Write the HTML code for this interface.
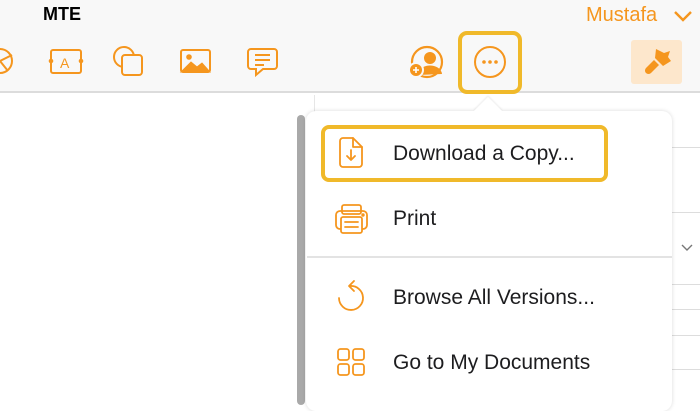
<!DOCTYPE html>
<html><head><style>
*{margin:0;padding:0;box-sizing:border-box}
body{width:700px;height:401px;overflow:hidden;background:#fff;font-family:"Liberation Sans",sans-serif;position:relative}
.tb{position:absolute;left:0;top:0;width:700px;height:93px;background:#f8f8f8;border-bottom:2px solid #dcdcdc}
.abs{position:absolute}
.line{position:absolute;left:672px;width:28px;height:1px;background:#ddd}
.t{position:absolute;left:393px;font-size:21px;color:#1d1d1f}
</style></head><body>
<div class="tb"></div>
<div class="abs" style="left:43px;top:4px;font-size:18px;font-weight:bold;color:#000">MTE</div>
<div class="abs" style="left:586px;top:4px;font-size:20px;color:#f5961e">Mustafa</div>
<svg class="abs" style="left:672px;top:6px" width="22" height="20"><path d="M3 6l8 8 8-8" fill="none" stroke="#f5961e" stroke-width="2.4"/></svg>
<svg class="abs" style="left:0;top:40px" width="300" height="40" stroke="#f5961e" fill="none" stroke-width="2">
<path d="M0 9a12 12 0 1 1 0 24"/><path d="M0 21l12-6M0 21l8 10"/>
<rect x="51" y="10" width="30" height="23" rx="2"/><circle cx="51" cy="21" r="1.3" fill="#f5961e"/><circle cx="81" cy="21" r="1.3" fill="#f5961e"/><text x="60" y="28" font-size="14" fill="#f5961e" stroke="none" font-family="Liberation Sans">A</text>
<circle cx="124" cy="17" r="10"/><rect x="122" y="15" width="20" height="20" rx="3" fill="#f8f8f8"/>
<rect x="181" y="10" width="29" height="22" rx="2"/><path d="M181 32l10-10 6 5 5-4 8 9z" fill="#f5961e" stroke-width="1"/><circle cx="189" cy="17" r="2.8" fill="#f5961e" stroke="none"/>
<path d="M251 9h23a3 3 0 0 1 3 3v14a3 3 0 0 1-3 3h-11l-7 6v-6h-5a3 3 0 0 1-3-3v-14a3 3 0 0 1 3-3z"/><path d="M255 15h15M255 20h15M255 25h9"/>
</svg>
<svg class="abs" style="left:405px;top:40px" width="45" height="40">
<circle cx="22" cy="22" r="15" fill="none" stroke="#f5961e" stroke-width="2.2"/><circle cx="25" cy="18" r="6" fill="#f5961e"/><path d="M13 35a12 9 0 0 1 24-1z" fill="#f5961e"/><circle cx="11" cy="30" r="8" fill="#f8f8f8"/><circle cx="11" cy="30" r="6" fill="#f5961e"/><path d="M8 30h6M11 27v6" stroke="#fff" stroke-width="1.6"/>
</svg>
<div class="abs" style="left:458px;top:31px;width:64px;height:63px;border:4px solid #f0b92a;border-radius:9px;background:#f8f8f8"></div>
<svg class="abs" style="left:470px;top:43px" width="40" height="40"><circle cx="20" cy="19" r="15" fill="none" stroke="#f5961e" stroke-width="2"/><circle cx="14" cy="19" r="1.8" fill="#f5961e"/><circle cx="20" cy="19" r="1.8" fill="#f5961e"/><circle cx="26" cy="19" r="1.8" fill="#f5961e"/></svg>
<div class="abs" style="left:631px;top:40px;width:51px;height:44px;background:#fde7cc;border-radius:3px"></div>
<svg class="abs" style="left:640px;top:45px" width="34" height="34" fill="#f5961e"><path d="M16 4l8 4 6-2-2 6 3 4-8 5-8-8z"/><path d="M14 15l5 5-8 8a3 3 0 0 1-5-5z"/></svg>
<div class="abs" style="left:314px;top:95px;width:1px;height:306px;background:#e6e6e6"></div>
<div class="line" style="top:147px"></div><div class="line" style="top:212px"></div><div class="line" style="top:284px"></div><div class="line" style="top:309px"></div><div class="line" style="top:335px"></div><div class="line" style="top:369px"></div>
<svg class="abs" style="left:680px;top:242px" width="14" height="12"><path d="M2 3l5 5 5-5" fill="none" stroke="#777" stroke-width="1.4"/></svg>
<div class="abs" style="left:297px;top:115px;width:8px;height:290px;background:#a9a9a9;border-radius:4px"></div>
<div class="abs" style="left:306px;top:111px;width:366px;height:300px;background:#fff;border-radius:10px;box-shadow:0 0 4px rgba(0,0,0,.15)"></div>
<div class="abs" style="left:478px;top:101px;width:20px;height:20px;background:#fff;transform:rotate(45deg);box-shadow:-1px -1px 2px rgba(0,0,0,.08)"></div>
<div class="abs" style="left:470px;top:111px;width:40px;height:10px;background:#fff"></div>
<div class="abs" style="left:321px;top:125px;width:287px;height:57px;border:4px solid #f0b92a;border-radius:8px"></div>
<div class="abs" style="left:307px;top:256px;width:365px;height:2px;background:#e3e3e3"></div>
<svg class="abs" style="left:330px;top:135px" width="45" height="250" fill="none" stroke="#f5961e" stroke-width="1.8" stroke-linecap="round" stroke-linejoin="round">
<path d="M13 3h10l9 9v17a3 3 0 0 1-3 3h-16a3 3 0 0 1-3-3v-23a3 3 0 0 1 3-3z"/><path d="M23 3v9h9M21 15v10M17 21l4 4 4-4"/>
<rect x="12" y="70" width="19" height="9" rx="2"/><rect x="6" y="76" width="31" height="18" rx="4"/><rect x="11" y="82" width="21" height="16" rx="2" fill="#fff"/><path d="M15 87h13M15 92h13"/><circle cx="33" cy="80" r="0.8" fill="#f5961e"/>
<path d="M9 163A12 12 0 1 0 20 151"/><path d="M24 146l-5 5 5 5"/>
<rect x="8" y="214" width="11" height="11" rx="2.5"/><rect x="23" y="214" width="11" height="11" rx="2.5"/><rect x="8" y="229" width="11" height="11" rx="2.5"/><rect x="23" y="229" width="11" height="11" rx="2.5"/>
</svg>
<div class="t" style="top:142px">Download a Copy...</div>
<div class="t" style="top:207px">Print</div>
<div class="t" style="top:286px">Browse All Versions...</div>
<div class="t" style="top:351px">Go to My Documents</div>
</body></html>
